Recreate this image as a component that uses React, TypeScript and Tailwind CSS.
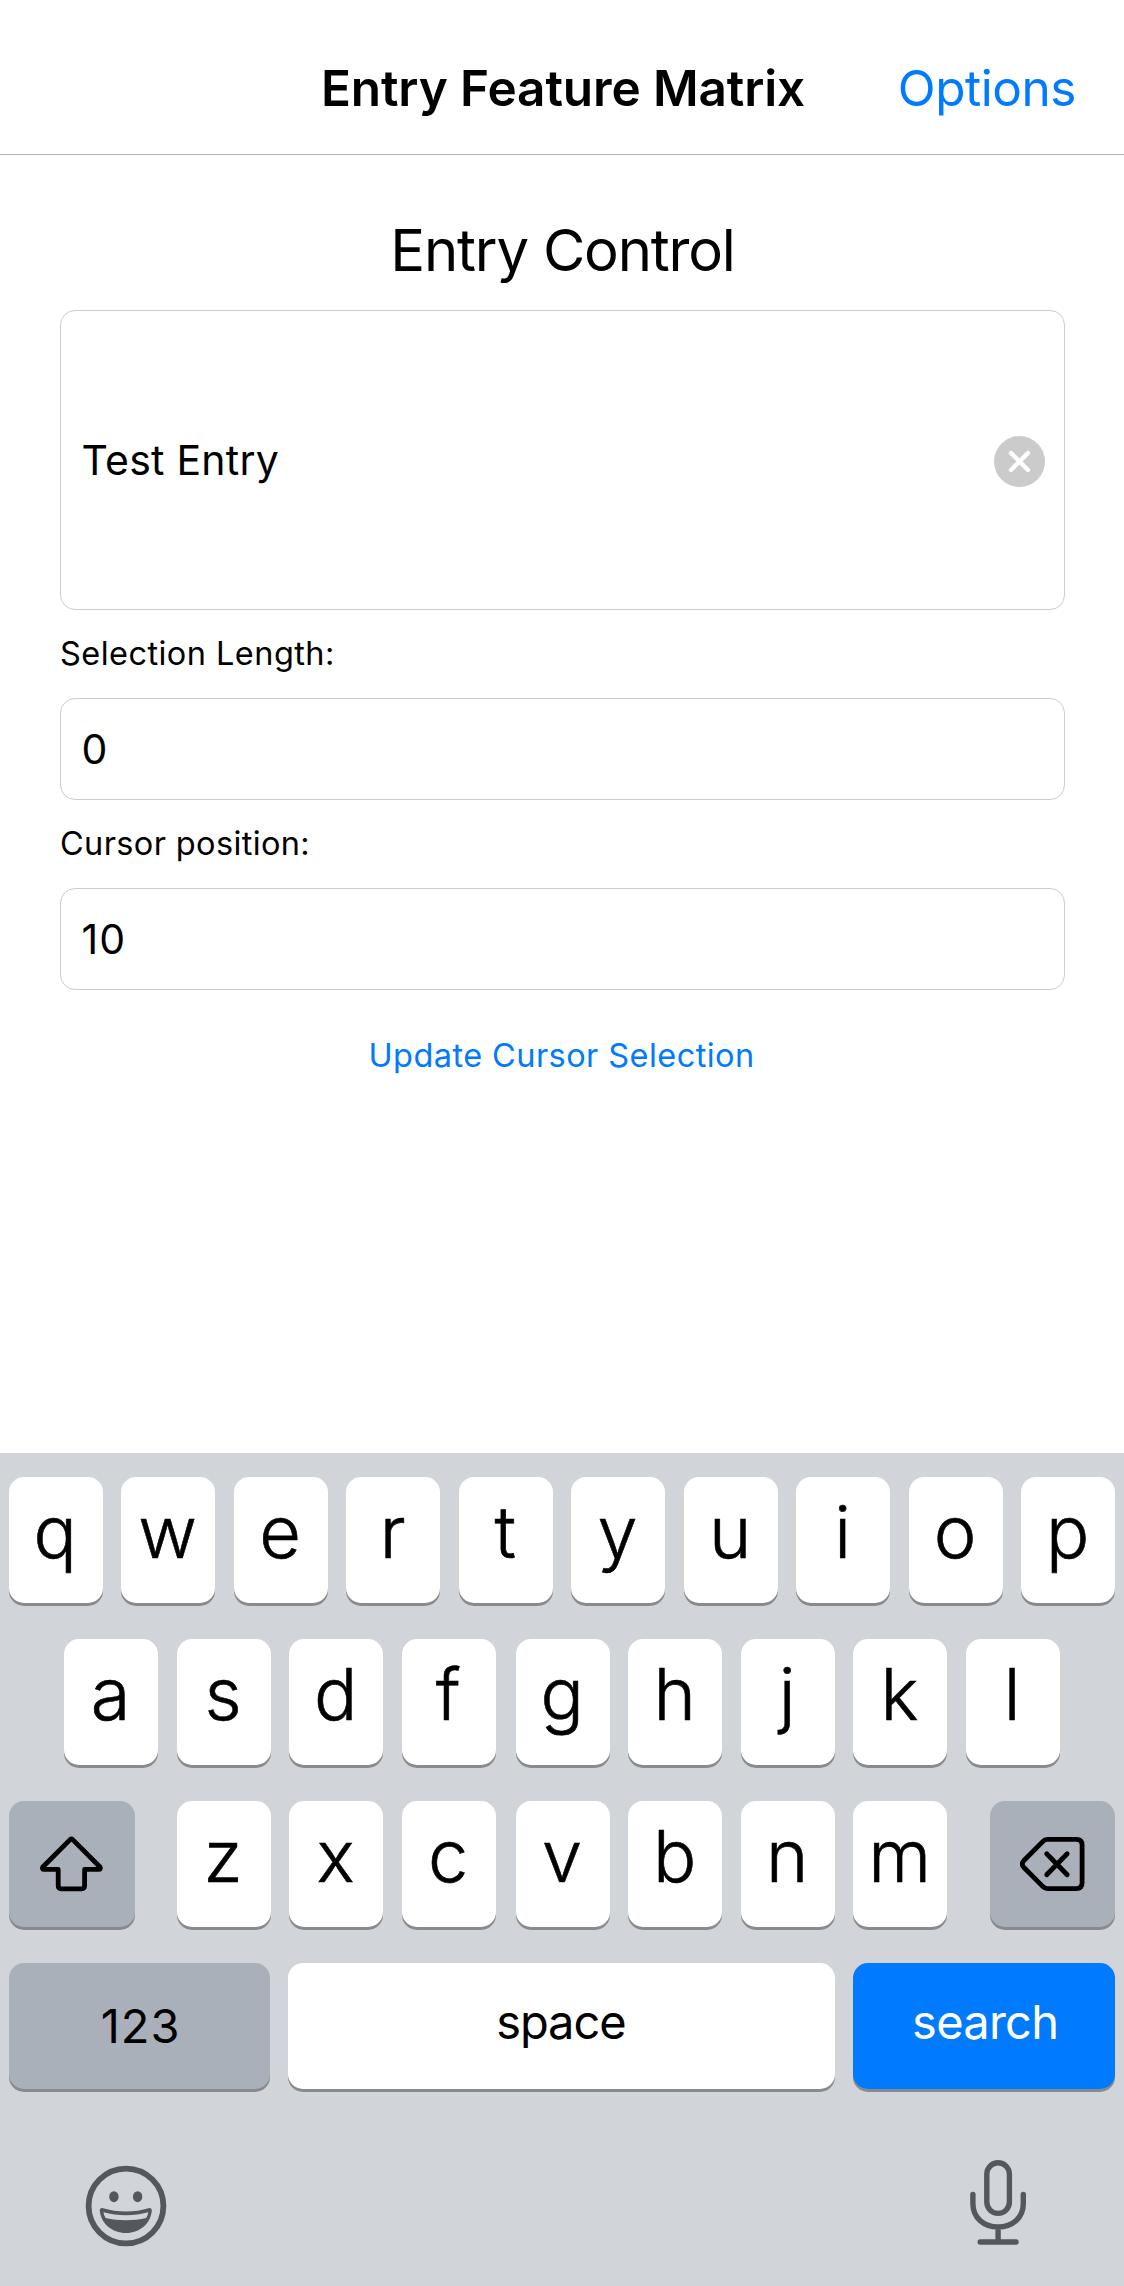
import React from "react";

const ROW_ONE = ["q", "w", "e", "r", "t", "y", "u", "i", "o", "p"];
const ROW_TWO_LEFT = ["a", "s", "d", "f"];
const ROW_TWO_RIGHT = ["g", "h", "j", "k", "l"];
const ROW_THREE_LEFT = ["z", "x", "c"];
const ROW_THREE_RIGHT = ["v", "b", "n", "m"];

function Key({ className = "", children }: { className?: string; children: React.ReactNode }) {
  return (
    <button
      type="button"
      className={`flex h-[126px] shrink-0 items-center justify-center rounded-[15px] shadow-[0_3px_0_#898a8d] ${className}`}
    >
      {children}
    </button>
  );
}

function Letters({ letters }: { letters: string[] }) {
  return (
    <div className="flex gap-[18.5px]">
      {letters.map((letter) => (
        <Key
          key={letter}
          className="w-[94px] bg-white pr-[1.5px] pb-4 text-[72px] leading-none font-light [-webkit-text-stroke:0.6px_black]"
        >
          {letter}
        </Key>
      ))}
    </div>
  );
}

function Field({ value, className = "", children }: { value: string; className?: string; children?: React.ReactNode }) {
  return (
    <div
      className={`flex items-center justify-between rounded-[15px] border border-[#cccccc] pr-[19px] pl-[20.5px] text-[41px] leading-none ${className}`}
    >
      <span>{value}</span>
      {children}
    </div>
  );
}

function ClearIcon() {
  return (
    <svg width="51" height="51" viewBox="0 0 51 51" className="relative top-[1.5px]">
      <circle cx="25.5" cy="25.5" r="25.5" fill="#cbcbcb" />
      <path d="M17 17 L34 34 M34 17 L17 34" stroke="#fff" strokeWidth="4.4" strokeLinecap="round" />
    </svg>
  );
}

function ShiftIcon() {
  return (
    <svg width="64" height="56" viewBox="0.6 0 64 56" fill="none" stroke="#000" strokeWidth="4.8" strokeLinejoin="round">
      <path d="M30.7 3.6 Q32 2.5 33.3 3.6 L60.6 31 Q61.6 33.4 59.8 33.4 H45.2 V49.5 Q45.2 52.8 42 52.8 H22 Q18.8 52.8 18.8 49.5 V33.4 H4.2 Q2.4 33.4 3.4 31 Z" />
    </svg>
  );
}

function DeleteIcon() {
  return (
    <svg width="66" height="54" viewBox="0.7 0 66 54" fill="none" stroke="#000" strokeWidth="4.8" strokeLinecap="round" strokeLinejoin="round">
      <path d="M28 2.4 H57 Q62.8 2.4 62.8 8.2 V45.8 Q62.8 51.6 57 51.6 H28 Q25.4 51.6 23.4 49.4 L4.4 30.2 Q1.4 27 4.4 23.8 L23.4 4.6 Q25.4 2.4 28 2.4 Z" />
      <path d="M27.4 16.7 L47.9 37.7 M47.9 16.7 L27.4 37.7" />
    </svg>
  );
}

function EmojiIcon() {
  return (
    <svg width="82" height="82" viewBox="0 0 82 82" fill="none">
      <circle cx="41" cy="41" r="37.4" stroke="#53585f" strokeWidth="5.8" />
      <ellipse cx="28.9" cy="31.7" rx="4.7" ry="5.5" fill="#53585f" />
      <ellipse cx="52.6" cy="31.7" rx="4.7" ry="5.5" fill="#53585f" />
      <path
        d="M17.2 43 C15.2 43 14.6 44.4 14.8 46 C16.2 58.5 27 68 41 68 C55 68 65.4 58.5 66.8 46 C67 44.4 66.4 43 64.4 43 C49 47.8 33 47.8 17.2 43 Z M18.5 47.2 C33 51.1 49 51.1 63.2 47.2 Q63 50.8 61.2 53 C49 56 33 56 20.6 53 Q18.8 50.8 18.5 47.2 Z"
        fill="#53585f"
        fillRule="evenodd"
      />
    </svg>
  );
}

function MicIcon() {
  return (
    <svg width="58" height="86" viewBox="0 0 58 86" fill="none" stroke="#53585f" strokeWidth="5.4" strokeLinecap="round">
      <rect x="16.8" y="2.8" width="22.6" height="50.6" rx="11.3" />
      <path d="M2.9 34.5 V43.5 C2.9 57.5 13.4 67 28.1 67 C42.8 67 53.3 57.5 53.3 43.5 V34.5 M28.1 67 V82 M10.2 82 H46" />
    </svg>
  );
}

export default function App() {
  return (
    <div className="flex h-[2286px] w-[1124px] flex-col overflow-hidden bg-white font-['Inter',sans-serif] text-black">
      <header className="grid h-[155px] shrink-0 grid-cols-[1fr_auto_1fr] items-center border-b border-[#b2b2b2] pt-6 text-[49.5px] leading-none">
        <div />
        <h1 className="pl-0.5 font-semibold tracking-[-0.11px]">Entry Feature Matrix</h1>
        <a className="pr-[48px] text-right tracking-[-0.46px] text-[#007aff]">Options</a>
      </header>

      <main className="flex grow flex-col pr-[59px] pl-[60px] pt-[59px]">
        <h2 className="mb-6 text-center text-[58px] leading-[72px] tracking-[-1.19px]">Entry Control</h2>
        <Field value="Test Entry" className="h-[300px] tracking-[0.24px]">
          <ClearIcon />
        </Field>
        <label className="flex h-[88px] items-center text-[32.5px] leading-none tracking-[0.45px]">
          Selection Length:
        </label>
        <Field value="0" className="h-[102px]" />
        <label className="flex h-[88px] items-center text-[32.5px] leading-none tracking-[0.37px]">
          Cursor position:
        </label>
        <Field value="10" className="h-[102px] tracking-[1px]" />
        <button
          type="button"
          className="mt-[46px] pr-0.5 text-[32.5px] leading-[40px] tracking-[0.43px] text-[#007aff]"
        >
          Update Cursor Selection
        </button>
      </main>

      <section className="flex h-[833px] shrink-0 flex-col bg-[#d1d4d9] px-[8.9px] pt-6">
        <div className="flex flex-col gap-9">
          <Letters letters={ROW_ONE} />
          <div className="flex gap-5 pl-[55.5px]">
            <Letters letters={ROW_TWO_LEFT} />
            <Letters letters={ROW_TWO_RIGHT} />
          </div>
          <div className="flex">
            <Key className="mr-[42px] w-[126px] bg-[#aab0ba]">
              <ShiftIcon />
            </Key>
            <div className="flex gap-5">
              <Letters letters={ROW_THREE_LEFT} />
              <Letters letters={ROW_THREE_RIGHT} />
            </div>
            <Key className="ml-[42.5px] w-[125.5px] bg-[#aab0ba]">
              <DeleteIcon />
            </Key>
          </div>
          <div className="flex text-[47px] leading-none">
            <Key className="w-[261.5px] bg-[#aab0ba] pb-0.5 pl-0.5 tracking-[1px]">123</Key>
            <Key className="ml-[17.5px] w-[547px] bg-white pr-px pb-2.5 tracking-[-1.07px]">space</Key>
            <Key className="ml-[18.5px] w-[261.5px] bg-[#007aff] pb-2.5 pl-0.5 tracking-[-0.76px] text-white shadow-[0_3px_0_#686a6e]">
              search
            </Key>
          </div>
        </div>
        <div className="mt-[71px] flex items-start justify-between pr-[87.5px] pl-[76.5px]">
          <span className="pt-[5px]">
            <EmojiIcon />
          </span>
          <MicIcon />
        </div>
      </section>
    </div>
  );
}
